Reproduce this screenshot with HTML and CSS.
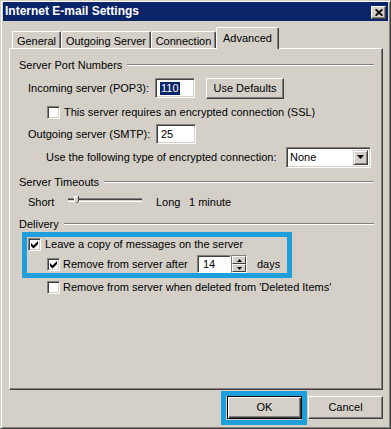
FILE: index.html
```html
<!DOCTYPE html>
<html>
<head>
<meta charset="utf-8">
<title>Internet E-mail Settings</title>
<link rel="stylesheet" href="styles.css">
</head>
<body>
<div class="window">
  <div class="titlebar">
    <span class="title">Internet E-mail Settings</span>
    <span class="close"><svg width="8" height="7" viewBox="0 0 8 7"><path d="M0.6 0.3 L7.4 6.7 M7.4 0.3 L0.6 6.7" stroke="#000" stroke-width="1.7"/></svg></span>
  </div>
  <div class="body">
    <div class="tabs">
      <div class="tab t-general">General</div>
      <div class="tab t-outgoing">Outgoing Server</div>
      <div class="tab t-connection">Connection</div>
      <div class="tab active t-advanced">Advanced</div>
    </div>
    <div class="panel">
      <div class="content">
        <div class="heading"><span>Server Port Numbers</span><span class="gline"></span></div>

        <div class="row r-in">
          <span class="lbl-in">Incoming server (POP3):</span>
          <span class="field"><span class="sel">110</span></span>
          <span class="btn btn-defaults">Use Defaults</span>
        </div>

        <div class="row r-ssl">
          <span class="cb"></span>
          <span class="cb-text">This server requires an encrypted connection (SSL)</span>
        </div>

        <div class="row r-out">
          <span class="lbl-out">Outgoing server (SMTP):</span>
          <span class="field">25</span>
        </div>

        <div class="row r-enc">
          <span class="lbl-enc">Use the following type of encrypted connection:</span>
          <span class="select"><span class="select-val">None</span><span class="dd"><svg width="7" height="4" viewBox="0 0 7 4"><path d="M0 0h7L3.5 4z" fill="#000"/></svg></span></span>
        </div>

        <div class="heading h-timeouts"><span>Server Timeouts</span><span class="gline"></span></div>

        <div class="row r-slider">
          <span class="lbl-short">Short</span>
          <svg class="slider" width="74" height="12" viewBox="0 0 74 12">
            <rect x="0" y="2" width="74" height="1" fill="#808080"/>
            <rect x="0" y="3" width="74" height="1" fill="#404040"/>
            <rect x="0" y="4" width="74" height="1" fill="#d4d0c8"/>
            <rect x="0" y="5" width="74" height="1" fill="#fff"/>
            <path d="M6 0h5v5l-2.5 2.5L6 5z" fill="#d4d0c8"/>
            <path d="M6 0.5h4.5M6.5 0v5" stroke="#fff" stroke-width="1"/>
            <path d="M10.5 0v5.2L8.5 7.3" stroke="#404040" stroke-width="1" fill="none"/>
          </svg>
          <span class="lbl-long">Long</span>
          <span>1 minute</span>
        </div>

        <div class="heading h-delivery"><span>Delivery</span><span class="gline"></span></div>

        <div class="hl-group">
          <div class="row r-leave">
            <span class="cb"><svg width="11" height="11" viewBox="0 0 11 11"><path d="M2 4 L4.5 6.5 L9 2 L9 5 L4.5 9.5 L2 7 Z" fill="#000"/></svg></span>
            <span class="cb-text">Leave a copy of messages on the server</span>
          </div>
          <div class="row r-after">
            <span class="cb"><svg width="11" height="11" viewBox="0 0 11 11"><path d="M2 4 L4.5 6.5 L9 2 L9 5 L4.5 9.5 L2 7 Z" fill="#000"/></svg></span>
            <span class="cb-text lbl-after">Remove from server after</span>
            <span class="spin">
              <span class="spin-input">14</span>
              <span class="spin-arrows">
                <span class="arrow-btn"><svg width="5" height="3" viewBox="0 0 5 3"><path d="M2.5 0L5 3H0z" fill="#000"/></svg></span>
                <span class="arrow-btn"><svg width="5" height="3" viewBox="0 0 5 3"><path d="M0 0h5L2.5 3z" fill="#000"/></svg></span>
              </span>
            </span>
            <span class="days">days</span>
          </div>
          <span class="mark mark-delivery"></span>
        </div>

        <div class="row r-del">
          <span class="cb"></span>
          <span class="cb-text">Remove from server when deleted from 'Deleted Items'</span>
        </div>
      </div>
    </div>
  </div>
  <div class="footer">
    <div class="ok-wrap">
      <span class="btn btn-default">OK</span>
      <span class="mark mark-ok"></span>
    </div>
    <span class="btn btn-cancel">Cancel</span>
  </div>
</div>
</body>
</html>
```

FILE: styles.css
```css
html, body {
  margin: 0;
  padding: 0;
  background: #d4d0c8;
}

body {
  font-family: "Liberation Sans", Arial, sans-serif;
  font-size: 11px;
  line-height: 13px;
  color: #000;
}

.window {
  width: 391px;
  height: 429px;
  box-sizing: border-box;
  background: #d4d0c8;
  border: 1px solid;
  border-color: #d4d0c8 #404040 #404040 #d4d0c8;
  box-shadow: inset 1px 1px #fff, inset -1px -1px #808080;
  padding: 1px 2px 1px 2px;
  display: flex;
  flex-direction: column;
}

.titlebar {
  height: 19px;
  background: #0a246a;
  display: flex;
  align-items: center;
  justify-content: space-between;
  padding: 0 2px 0 2px;
  flex: none;
}

.title {
  color: #fff;
  font-weight: bold;
  font-size: 12px;
}

.close {
  width: 15px;
  height: 13px;
  box-sizing: border-box;
  background: #d4d0c8;
  border: 1px solid;
  border-color: #fff #404040 #404040 #fff;
  box-shadow: inset -1px -1px #808080;
  display: flex;
  align-items: center;
  justify-content: center;
  margin-top: 1px;
}

.close svg {
  display: block;
}

.body {
  padding: 0 5px 0 6px;
  flex: none;
}

.tabs {
  height: 21px;
  margin-top: 6px;
  padding-left: 3px;
  display: flex;
  align-items: flex-end;
}

.tab {
  height: 17px;
  box-sizing: border-box;
  border-top: 1px solid #fff;
  border-left: 1px solid #fff;
  border-right: 1px solid #404040;
  box-shadow: inset -1px 0 #808080;
  border-radius: 2px 2px 0 0;
  background: #d4d0c8;
  display: flex;
  justify-content: center;
  align-items: center;
  padding-top: 2px;
  white-space: nowrap;
}

.tab.active {
  height: 22px;
  margin-bottom: -1px;
  position: relative;
  z-index: 1;
  padding-top: 0;
  padding-bottom: 1px;
}

.t-general { width: 49px; }
.t-outgoing { width: 90px; }
.t-connection { width: 65px; }
.t-advanced { width: 63px; }

.panel {
  height: 342px;
  box-sizing: border-box;
  border: 1px solid;
  border-color: #fff #404040 #404040 #fff;
  box-shadow: inset -1px -1px #808080;
}

.content {
  padding: 8px 8px 0 9px;
}

.heading {
  height: 16px;
  display: flex;
  align-items: center;
}

.gline {
  flex: 1;
  height: 0;
  border-top: 1px solid #808080;
  border-bottom: 1px solid #fff;
  margin-left: 5px;
}

.row {
  display: flex;
  align-items: center;
  white-space: nowrap;
}

.r-in { height: 22px; margin-top: 4px; padding-left: 9px; }
.lbl-in { width: 127px; }

.field {
  width: 40px;
  height: 20px;
  box-sizing: border-box;
  background: #fff;
  border: 1px solid;
  border-color: #808080 #fff #fff #808080;
  box-shadow: inset 1px 1px #404040, inset -1px -1px #d4d0c8;
  padding-left: 4px;
  display: flex;
  align-items: center;
}

.sel {
  background: #0a246a;
  color: #fff;
  padding: 0 1px;
}

.btn {
  box-sizing: border-box;
  background: #d4d0c8;
  border: 1px solid;
  border-color: #fff #404040 #404040 #fff;
  box-shadow: inset -1px -1px #808080;
  display: flex;
  align-items: center;
  justify-content: center;
}

.btn-defaults {
  width: 78px;
  height: 21px;
  margin-left: 11px;
}

.r-ssl { height: 18px; margin-top: 4px; padding-left: 28px; }

.cb {
  width: 13px;
  height: 13px;
  box-sizing: border-box;
  background: #fff;
  border: 1px solid;
  border-color: #808080 #fff #fff #808080;
  box-shadow: inset 1px 1px #404040, inset -1px -1px #d4d0c8;
  flex: none;
}

.cb svg {
  display: block;
}

.cb-text { margin-left: 4px; }

.r-out { height: 22px; margin-top: 2px; padding-left: 9px; }
.lbl-out { width: 128px; }

.r-enc { height: 22px; margin-top: 1px; padding-left: 27px; }
.lbl-enc { width: 240px; }

.select {
  width: 85px;
  height: 21px;
  box-sizing: border-box;
  background: #fff;
  border: 1px solid;
  border-color: #808080 #fff #fff #808080;
  box-shadow: inset 1px 1px #404040, inset -1px -1px #d4d0c8;
  padding: 2px 2px 2px 2px;
  display: flex;
  align-items: center;
}

.select-val {
  flex: 1;
  padding-left: 1px;
}

.dd {
  width: 15px;
  height: 15px;
  box-sizing: border-box;
  background: #d4d0c8;
  border: 1px solid;
  border-color: #d4d0c8 #404040 #404040 #d4d0c8;
  box-shadow: inset 1px 1px #fff, inset -1px -1px #808080;
  display: flex;
  align-items: center;
  justify-content: center;
}

.dd svg { display: block; }

.h-timeouts { margin-top: 6px; }

.r-slider { height: 20px; margin-top: 2px; padding-left: 9px; }
.lbl-short { width: 40px; }
.slider { display: block; flex: none; }
.lbl-long { width: 33px; margin-left: 14px; }

.h-delivery { margin-top: 4px; }

.hl-group {
  position: relative;
  margin-top: 3px;
}

.r-leave { height: 18px; padding-left: 9px; }

.r-after { height: 20px; margin-top: 1px; padding-left: 28px; }
.lbl-after { width: 134px; margin-left: 3px; }

.spin {
  display: flex;
  height: 18px;
}

.spin-input {
  width: 34px;
  height: 18px;
  box-sizing: border-box;
  background: #fff;
  border: 1px solid;
  border-color: #808080 #fff #fff #808080;
  box-shadow: inset 1px 1px #404040;
  padding-left: 5px;
  display: flex;
  align-items: center;
}

.spin-arrows {
  width: 16px;
  height: 18px;
  box-sizing: border-box;
  background: #fff;
  border: 1px solid;
  border-color: #808080 #fff #fff #808080;
  display: flex;
  flex-direction: column;
}

.arrow-btn {
  flex: 1;
  box-sizing: border-box;
  background: #d4d0c8;
  border: 1px solid;
  border-color: #fff #404040 #404040 #fff;
  display: flex;
  align-items: center;
  justify-content: center;
}

.arrow-btn svg { display: block; }

.days { margin-left: 10px; }

.r-del { height: 18px; margin-top: 4px; padding-left: 28px; }
.r-del .cb-text { margin-left: 3px; }

.mark {
  position: absolute;
  box-sizing: border-box;
  border: 5px solid #1e9fdc;
  pointer-events: none;
}

.mark-delivery {
  left: 3px;
  top: -3px;
  width: 270px;
  height: 46px;
}

.footer {
  display: flex;
  justify-content: flex-end;
  padding: 6px 5px 0 0;
  gap: 6px;
}

.ok-wrap {
  position: relative;
}

.btn-default {
  width: 75px;
  height: 23px;
  border: 1px solid #000;
  box-shadow: inset 1px 1px #fff, inset -1px -1px #404040, inset -2px -2px #808080;
}

.btn-cancel {
  width: 75px;
  height: 23px;
}

.mark-ok {
  left: -6px;
  top: -5px;
  width: 86px;
  height: 34px;
}
```
